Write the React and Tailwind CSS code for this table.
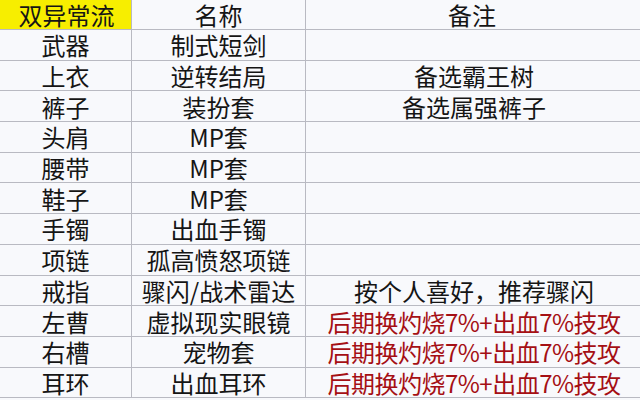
import React from "react";

const rows = [
  ["武器", "制式短剑", ""],
  ["上衣", "逆转结局", "备选霸王树"],
  ["裤子", "装扮套", "备选属强裤子"],
  ["头肩", "MP套", ""],
  ["腰带", "MP套", ""],
  ["鞋子", "MP套", ""],
  ["手镯", "出血手镯", ""],
  ["项链", "孤高愤怒项链", ""],
  ["戒指", "骤闪/战术雷达", "按个人喜好，推荐骤闪"],
  ["左曹", "虚拟现实眼镜", "后期换灼烧7%+出血7%技攻", true],
  ["右槽", "宠物套", "后期换灼烧7%+出血7%技攻", true],
  ["耳环", "出血耳环", "后期换灼烧7%+出血7%技攻", true],
];

const font = { fontFamily: '"Noto Sans CJK SC", "Noto Sans", sans-serif' };

export default function App() {
  return (
    <div
      className="w-[640px] h-[400px] overflow-hidden bg-[#f8f9fc] text-[#151515] text-[24px] leading-[26px]"
      style={font}
    >
      <div className="grid grid-cols-[132px_174px_336px] w-[642px]">
        <div className="h-[30px] bg-[#f7ee00] border-b border-r border-[#b9bac2] flex items-center justify-center pl-[2px]">
          双异常流
        </div>
        <div className="h-[30px] border-b border-r border-[#b9bac2] flex items-center justify-center">
          名称
        </div>
        <div className="h-[30px] border-b border-[#b9bac2] flex items-center justify-center pr-[4px]">
          备注
        </div>
        {rows.map(([a, b, c, red], i) => (
          <React.Fragment key={i}>
            <div className="h-[30.7px] pt-[1px] border-b border-r border-[#b9bac2] flex items-center justify-center">
              {a}
            </div>
            <div className="h-[30.7px] pt-[1px] border-b border-r border-[#b9bac2] flex items-center justify-center">
              {b}
            </div>
            <div
              className={
                "h-[30.7px] pt-[1px] border-b border-[#b9bac2] flex items-center justify-center whitespace-nowrap " +
                (red ? "text-[#a50f14] tracking-[-0.5px]" : "")
              }
            >
              {c}
            </div>
          </React.Fragment>
        ))}
      </div>
    </div>
  );
}
